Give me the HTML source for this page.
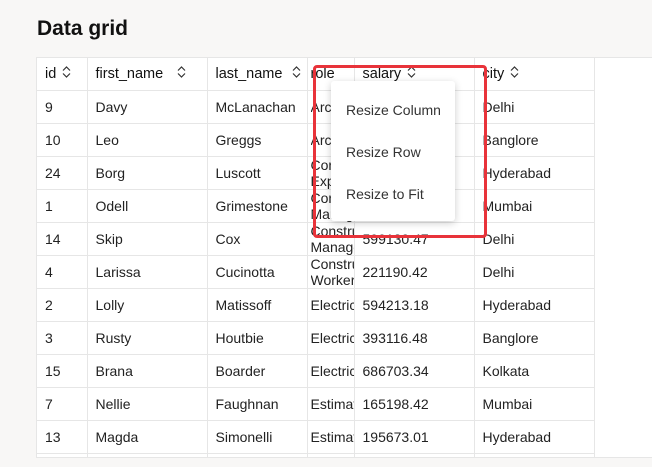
<!DOCTYPE html>
<html><head><style>
body{margin:0;width:652px;height:467px;background:#f8f7f6;font-family:"Liberation Sans",sans-serif;color:#222;overflow:hidden;position:relative}
h1{position:absolute;left:37px;top:17px;margin:0;font-size:21px;font-weight:bold;color:#111}
.grid{position:absolute;left:36px;top:57px;width:616px;height:399px;background:#fff;border-top:1px solid #e6e6e6;border-left:1px solid #e6e6e6;border-bottom:1px solid #e6e6e6;overflow:hidden}
table{border-collapse:collapse;table-layout:fixed;font-size:14px;width:557px}
td,th{border-right:1px solid #e6e6e6;border-bottom:1px solid #e6e6e6;height:32px;padding:0 0 0 8px;white-space:nowrap;overflow:hidden;text-align:left;font-weight:normal}
th{font-weight:normal;font-size:14.5px;color:#111}
th span{display:inline-block;width:8px;vertical-align:middle;margin-left:6px}
td.r,th.r{padding-left:3px}
.r div{height:32px;overflow:hidden;line-height:16px;font-size:14px;white-space:normal;word-break:normal;width:44px}
.r div.one{line-height:32px}
.red{position:absolute;left:313px;top:65px;width:168px;height:167px;border:3px solid #e8333a;border-radius:4px}
.menu{position:absolute;left:331px;top:81px;width:124px;height:140px;background:#fff;border-radius:3px;box-shadow:0 2px 8px rgba(0,0,0,.2);font-size:14px;color:#333}
.menu div{position:absolute;left:15px}
</style></head><body>
<h1>Data grid</h1>
<div class="grid">
<table>
<colgroup><col style="width:50px"><col style="width:120px"><col style="width:100px"><col style="width:47px"><col style="width:120px"><col style="width:120px"></colgroup>
<tr><th>id<span><svg width="9" height="12" viewBox="0 0 9 12"><path d="M1 4.5L4.5 1L8 4.5M1 7.5L4.5 11L8 7.5" fill="none" stroke="#333" stroke-width="1.2"/></svg></span></th>
<th>first_name<span style="margin-left:14px"><svg width="9" height="12" viewBox="0 0 9 12"><path d="M1 4.5L4.5 1L8 4.5M1 7.5L4.5 11L8 7.5" fill="none" stroke="#333" stroke-width="1.2"/></svg></span></th>
<th>last_name<span style="margin-left:10px"><svg width="9" height="12" viewBox="0 0 9 12"><path d="M1 4.5L4.5 1L8 4.5M1 7.5L4.5 11L8 7.5" fill="none" stroke="#333" stroke-width="1.2"/></svg></span></th>
<th class="r">role</th>
<th>salary<span><svg width="9" height="12" viewBox="0 0 9 12"><path d="M1 4.5L4.5 1L8 4.5M1 7.5L4.5 11L8 7.5" fill="none" stroke="#333" stroke-width="1.2"/></svg></span></th>
<th>city<span><svg width="9" height="12" viewBox="0 0 9 12"><path d="M1 4.5L4.5 1L8 4.5M1 7.5L4.5 11L8 7.5" fill="none" stroke="#333" stroke-width="1.2"/></svg></span></th></tr>
<tr><td>9</td><td>Davy</td><td>McLanachan</td><td class="r"><div class="one">Architect</div></td><td>599130.47</td><td>Delhi</td></tr>
<tr><td>10</td><td>Leo</td><td>Greggs</td><td class="r"><div class="one">Architect</div></td><td></td><td>Banglore</td></tr>
<tr><td>24</td><td>Borg</td><td>Luscott</td><td class="r"><div>Construction Expeditor</div></td><td></td><td>Hyderabad</td></tr>
<tr><td>1</td><td>Odell</td><td>Grimestone</td><td class="r"><div>Construction Manager</div></td><td></td><td>Mumbai</td></tr>
<tr><td>14</td><td>Skip</td><td>Cox</td><td class="r"><div>Construction Manager</div></td><td>599130.47</td><td>Delhi</td></tr>
<tr><td>4</td><td>Larissa</td><td>Cucinotta</td><td class="r"><div>Construction Worker</div></td><td>221190.42</td><td>Delhi</td></tr>
<tr><td>2</td><td>Lolly</td><td>Matissoff</td><td class="r"><div class="one">Electrician</div></td><td>594213.18</td><td>Hyderabad</td></tr>
<tr><td>3</td><td>Rusty</td><td>Houtbie</td><td class="r"><div class="one">Electrician</div></td><td>393116.48</td><td>Banglore</td></tr>
<tr><td>15</td><td>Brana</td><td>Boarder</td><td class="r"><div class="one">Electrician</div></td><td>686703.34</td><td>Kolkata</td></tr>
<tr><td>7</td><td>Nellie</td><td>Faughnan</td><td class="r"><div class="one">Estimator</div></td><td>165198.42</td><td>Mumbai</td></tr>
<tr><td>13</td><td>Magda</td><td>Simonelli</td><td class="r"><div class="one">Estimator</div></td><td>195673.01</td><td>Hyderabad</td></tr>
<tr><td></td><td></td><td></td><td></td><td></td><td></td></tr>
</table>
</div>
<div class="menu"><div style="top:21px">Resize Column</div><div style="top:63px">Resize Row</div><div style="top:105px">Resize to Fit</div></div>
<div class="red"></div>
</body></html>
